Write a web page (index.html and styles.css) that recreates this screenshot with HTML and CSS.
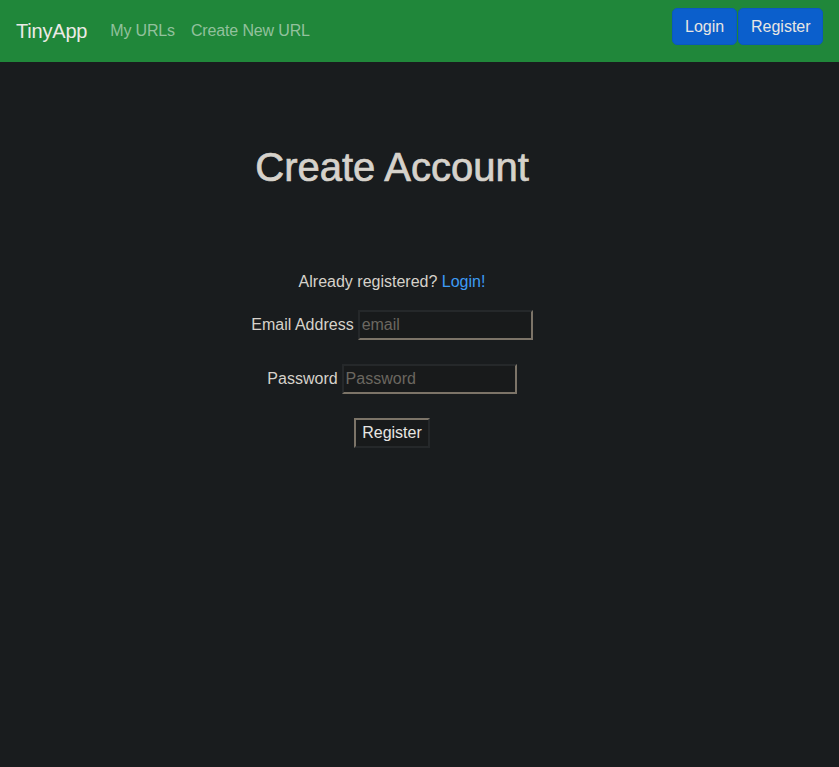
FILE: index.html
```html
<!DOCTYPE html>
<html lang="en">
<head>
<meta charset="utf-8">
<title>TinyApp - Register</title>
<link rel="stylesheet" href="styles.css">
</head>
<body>
<nav class="navbar">
  <div class="nav-left">
    <a class="brand" href="#">TinyApp</a>
    <a class="nav-link" href="#">My URLs</a>
    <a class="nav-link" href="#">Create New URL</a>
  </div>
  <div class="nav-right">
    <button class="btn-primary">Login</button>
    <button class="btn-primary">Register</button>
  </div>
</nav>
<main class="main">
  <h1 class="title">Create Account</h1>
  <p class="already">Already registered? <a href="#" class="login-link">Login!</a></p>
  <form class="form">
    <div class="row">
      <label class="label" for="email">Email Address</label>
      <input class="input" id="email" type="text" placeholder="email">
    </div>
    <div class="row">
      <label class="label" for="password">Password</label>
      <input class="input" id="password" type="password" placeholder="Password">
    </div>
    <button class="submit" type="button">Register</button>
  </form>
</main>
</body>
</html>
```
FILE: styles.css
```css
* { box-sizing: border-box; }
html, body { margin: 0; padding: 0; }
body {
  background: #191c1e;
  color: #d6d2cb;
  font-family: "Liberation Sans", Arial, sans-serif;
  font-size: 16px;
  line-height: 1.5;
  min-height: 767px;
}
.navbar {
  height: 62px;
  background: #20873a;
  display: flex;
  justify-content: space-between;
  align-items: flex-start;
  padding: 0 16px;
}
.nav-left {
  display: flex;
  align-items: center;
  height: 62px;
}
.brand {
  color: #eceae6;
  font-size: 20px;
  letter-spacing: -0.2px;
  text-decoration: none;
  margin-right: 23px;
}
.nav-link {
  color: #92c19d;
  text-decoration: none;
  font-size: 16px;
  letter-spacing: -0.15px;
  margin-right: 16px;
}
.nav-right {
  display: flex;
  gap: 1px;
  padding-top: 8px;
}
.btn-primary {
  background: #0b5fcc;
  color: #e8e6e3;
  border: 1px solid #0a58c0;
  border-radius: 5px;
  font-family: inherit;
  font-size: 16px;
  height: 37px;
  padding: 0 12px;
}
.btn-primary:first-child { width: 65px; }
.btn-primary:last-child { width: 85px; }
.main {
  display: flex;
  flex-direction: column;
  align-items: center;
  margin-right: 55px;
}
.title {
  font-size: 40px;
  font-weight: 500;
  line-height: 48px;
  margin: 81px 0 79px;
  color: #d6d2cb;
  -webkit-text-stroke: 0.7px #d6d2cb;
}
.already {
  margin: 0;
  line-height: 24px;
}
.login-link {
  color: #3d9bf5;
  text-decoration: none;
}
.form {
  display: flex;
  flex-direction: column;
  align-items: center;
}
.row {
  display: flex;
  align-items: center;
  gap: 4px;
  margin-top: 16px;
  margin-bottom: 8px;
  height: 30px;
}
.row + .row { margin-top: 16px; }
.label { color: #d6d2cb; }
.input {
  width: 175px;
  height: 30px;
  background: #181a1b;
  color: #d6d2cb;
  border: 2px solid;
  border-color: #25282a #7c7468 #7c7468 #25282a;
  font-family: inherit;
  font-size: 16px;
  padding: 1px 2px;
  outline: none;
}
.input::placeholder { color: #6b6760; }
.submit {
  margin-top: 16px;
  background: #181a1b;
  color: #e8e6e3;
  border: 2px solid;
  border-color: #7c7468 #25282a #25282a #7c7468;
  font-family: inherit;
  font-size: 16px;
  height: 30px;
  padding: 0 6px;
}
```
